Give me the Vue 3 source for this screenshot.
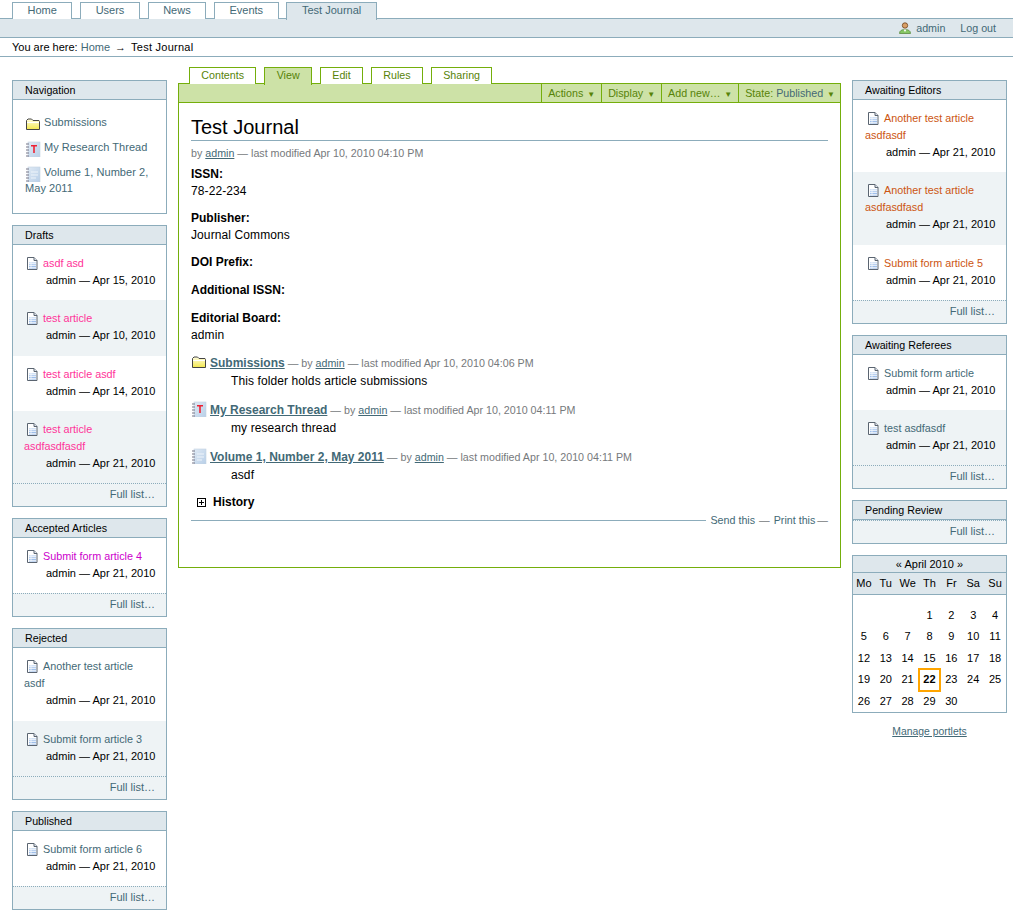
<script setup>
const topTabs = [
  { label: 'Home' },
  { label: 'Users' },
  { label: 'News' },
  { label: 'Events' },
  { label: 'Test Journal', active: true },
];

const viewTabs = [
  { label: 'Contents' },
  { label: 'View', active: true },
  { label: 'Edit' },
  { label: 'Rules' },
  { label: 'Sharing' },
];

const leftPortlets = [
  {
    title: 'Drafts',
    color: '#ff3399',
    items: [
      { title: 'asdf asd', date: 'Apr 15, 2010' },
      { title: 'test article', date: 'Apr 10, 2010' },
      { title: 'test article asdf', date: 'Apr 14, 2010' },
      { title: 'test article asdfasdfasdf', date: 'Apr 21, 2010' },
    ],
  },
  {
    title: 'Accepted Articles',
    color: '#cc00cc',
    items: [{ title: 'Submit form article 4', date: 'Apr 21, 2010' }],
  },
  {
    title: 'Rejected',
    color: '#436976',
    items: [
      { title: 'Another test article asdf', date: 'Apr 21, 2010' },
      { title: 'Submit form article 3', date: 'Apr 21, 2010' },
    ],
  },
  {
    title: 'Published',
    color: '#436976',
    items: [{ title: 'Submit form article 6', date: 'Apr 21, 2010' }],
  },
];

const rightPortlets = [
  {
    title: 'Awaiting Editors',
    color: '#cc5511',
    items: [
      { title: 'Another test article asdfasdf', date: 'Apr 21, 2010' },
      { title: 'Another test article asdfasdfasd', date: 'Apr 21, 2010' },
      { title: 'Submit form article 5', date: 'Apr 21, 2010' },
    ],
  },
  {
    title: 'Awaiting Referees',
    color: '#436976',
    items: [
      { title: 'Submit form article', date: 'Apr 21, 2010' },
      { title: 'test asdfasdf', date: 'Apr 21, 2010' },
    ],
  },
  { title: 'Pending Review', color: '#436976', items: [] },
];

const folderItems = [
  { icon: 'i-folder', title: 'Submissions', modified: 'Apr 10, 2010 04:06 PM', desc: 'This folder holds article submissions' },
  { icon: 'i-thread', title: 'My Research Thread', modified: 'Apr 10, 2010 04:11 PM', desc: 'my research thread' },
  { icon: 'i-book', title: 'Volume 1, Number 2, May 2011', modified: 'Apr 10, 2010 04:11 PM', desc: 'asdf' },
];

const weekdays = ['Mo', 'Tu', 'We', 'Th', 'Fr', 'Sa', 'Su'];
const weeks = [
  ['', '', '', 1, 2, 3, 4],
  [5, 6, 7, 8, 9, 10, 11],
  [12, 13, 14, 15, 16, 17, 18],
  [19, 20, 21, 22, 23, 24, 25],
  [26, 27, 28, 29, 30, '', ''],
];
</script>

<template>
  <div class="page">
    <svg class="defs" width="0" height="0">
      <defs>
        <linearGradient id="g-folder" x1="0" y1="0" x2="0" y2="1">
          <stop offset="0" stop-color="#fffde0" />
          <stop offset="1" stop-color="#f3e84e" />
        </linearGradient>
        <linearGradient id="g-note" x1="0" y1="0" x2="1" y2="1">
          <stop offset="0" stop-color="#dfe9f4" />
          <stop offset="1" stop-color="#b8cfe8" />
        </linearGradient>
        <linearGradient id="g-doc" x1="0" y1="0" x2="0" y2="1">
          <stop offset="0" stop-color="#d8e6f7" />
          <stop offset="1" stop-color="#86aee4" />
        </linearGradient>
      </defs>
      <symbol id="i-folder" viewBox="0 0 16 16">
        <path d="M1.5 13.500V4.500L3 3h3.500L8 4.500h6l.5 1v8z" fill="url(#g-folder)" stroke="#444" stroke-linejoin="round" />
        <path d="M2 6.500h12" stroke="#fff" />
      </symbol>
      <symbol id="i-thread" viewBox="0 0 16 16">
        <rect x="3" y="1" width="12" height="15" fill="url(#g-note)" stroke="#c4d2e0" stroke-width=".6" />
        <path d="M1 3h3M1 6h3M1 9h3M1 12h3M1 15h3" stroke="#778" />
        <path d="M6 4h6v1.500h-2.200V12H8.200V5.500H6z" fill="#ee2233" />
      </symbol>
      <symbol id="i-book" viewBox="0 0 16 16">
        <rect x="3" y="1" width="12" height="15" fill="url(#g-note)" stroke="#c4d2e0" stroke-width=".6" />
        <path d="M1 3h3M1 6h3M1 9h3M1 12h3M1 15h3" stroke="#778" />
        <path d="M6 6h7M6 9h7M6 12h5" stroke="#eef4fa" />
      </symbol>
      <symbol id="i-doc" viewBox="0 0 13 13">
        <path d="M1.500.500h6.500l3 3v9h-9.500z" fill="#fff" stroke="#5a6470" />
        <path d="M8 .500v3h3" fill="#dfe5ee" stroke="#5a6470" />
        <path d="M3 5h7v6.500H3z" fill="url(#g-doc)" />
        <path d="M5 5v6.500M3 6.500h7M3 8.500h7M3 10.500h7" stroke="#f2f6fb" stroke-width=".8" />
      </symbol>
      <symbol id="i-user" viewBox="0 0 12 12">
        <circle cx="6" cy="3.500" r="2.700" fill="#d99f66" stroke="#70431c" stroke-width=".8" />
        <path d="M.500 11.500c0-3 2.500-4 5.500-4s5.500 1 5.500 4z" fill="#86c765" stroke="#5c8a40" stroke-width=".8" />
        <path d="M4.500 7.500h3L6 10z" fill="#fff" />
      </symbol>
    </svg>

    <nav class="top-tabs">
      <a v-for="t in topTabs" :key="t.label" class="top-tab" :class="{ active: t.active }">{{ t.label }}</a>
    </nav>
    <div class="personal-bar">
      <svg class="icon user-icon"><use href="#i-user" /></svg>
      <a class="personal-link">admin</a>
      <a class="personal-link logout">Log out</a>
    </div>
    <div class="breadcrumbs">
      You are here:&nbsp;<a class="link">Home</a><span class="arrow">→</span><span class="crumb">Test Journal</span>
    </div>

    <div class="columns">
      <aside class="side">
        <section class="portlet nav-portlet">
          <h3 class="portlet-head">Navigation</h3>
          <div class="nav-body">
            <div class="nav-item"><svg class="icon"><use href="#i-folder" /></svg><a class="link">Submissions</a></div>
            <div class="nav-item"><svg class="icon"><use href="#i-thread" /></svg><a class="link">My Research Thread</a></div>
            <div class="nav-item"><svg class="icon"><use href="#i-book" /></svg><a class="link">Volume 1, Number 2, May 2011</a></div>
          </div>
        </section>

        <section v-for="p in leftPortlets" :key="p.title" class="portlet">
          <h3 class="portlet-head">{{ p.title }}</h3>
          <div v-for="item in p.items" :key="item.title" class="entry">
            <div class="entry-title" :style="{ color: p.color }">
              <svg class="icon doc-icon"><use href="#i-doc" /></svg>{{ item.title }}
            </div>
            <div class="entry-meta">admin — {{ item.date }}</div>
          </div>
          <div class="portlet-foot"><a class="link">Full list…</a></div>
        </section>
      </aside>

      <main class="center">
        <div class="view-tabs">
          <a v-for="t in viewTabs" :key="t.label" class="view-tab" :class="{ active: t.active }">{{ t.label }}</a>
        </div>
        <div class="action-bar">
          <span class="action">Actions <i class="caret">▼</i></span>
          <span class="action">Display <i class="caret">▼</i></span>
          <span class="action">Add new… <i class="caret">▼</i></span>
          <span class="action">State: <span class="state">Published</span> <i class="caret">▼</i></span>
        </div>
        <article class="content">
          <h1 class="title">Test Journal</h1>
          <div class="byline">by <a class="link under">admin</a> — last modified Apr 10, 2010 04:10 PM</div>

          <dl class="fields">
            <dt>ISSN:</dt>
            <dd>78-22-234</dd>
            <dt>Publisher:</dt>
            <dd>Journal Commons</dd>
            <dt>DOI Prefix:</dt>
            <dd class="empty"></dd>
            <dt>Additional ISSN:</dt>
            <dd class="empty"></dd>
            <dt>Editorial Board:</dt>
            <dd>admin</dd>
          </dl>

          <div v-for="f in folderItems" :key="f.title" class="folder-item">
            <div class="folder-line">
              <svg class="icon"><use :href="'#' + f.icon" /></svg>
              <a class="link under folder-title">{{ f.title }}</a>
              <span class="byline-inline"> — by <a class="link under">admin</a> — last modified {{ f.modified }}</span>
            </div>
            <div class="folder-desc">{{ f.desc }}</div>
          </div>

          <div class="history">
            <span class="plus-box"></span>
            <b>History</b>
          </div>

          <div class="doc-actions">
            <span class="rule"></span>
            <a class="link">Send this</a><span class="sep">—</span><a class="link">Print this</a><span class="sep">—</span>
          </div>
        </article>
      </main>

      <aside class="side right">
        <section v-for="p in rightPortlets" :key="p.title" class="portlet">
          <h3 class="portlet-head">{{ p.title }}</h3>
          <div v-for="item in p.items" :key="item.title" class="entry">
            <div class="entry-title" :style="{ color: p.color }">
              <svg class="icon doc-icon"><use href="#i-doc" /></svg>{{ item.title }}
            </div>
            <div class="entry-meta">admin — {{ item.date }}</div>
          </div>
          <div class="portlet-foot"><a class="link">Full list…</a></div>
        </section>

        <section class="portlet calendar">
          <div class="cal-head">« April 2010 »</div>
          <div class="cal-grid cal-weekdays">
            <span v-for="d in weekdays" :key="d">{{ d }}</span>
          </div>
          <div class="cal-body">
            <div v-for="(w, i) in weeks" :key="i" class="cal-grid cal-row">
              <span v-for="(d, j) in w" :key="j" :class="{ today: d === 22 }">{{ d }}</span>
            </div>
          </div>
        </section>
        <a class="manage">Manage portlets</a>
      </aside>
    </div>
  </div>
</template>

<style>
html, body {
  background: #fff;
}
</style>

<style scoped>
.page {
  font-family: "Liberation Sans", Arial, sans-serif;
  font-size: 11px;
  color: #000;
  line-height: 17px;
  height: 915px;
  overflow: hidden;
}

.defs {
  position: absolute;
}

.icon {
  width: 16px;
  height: 16px;
  vertical-align: -3px;
}

.link {
  color: #436976;
}

.under {
  text-decoration: underline;
}

.top-tabs {
  display: flex;
  gap: 7.8px;
  padding: 2px 0 0 12px;
  height: 16px;
}

.top-tab {
  height: 16px;
  line-height: 15px;
  padding: 0 14.5px;
  border: 1px solid #8cacbb;
  border-bottom: none;
  color: #436976;
  background: #fff;
}

.top-tab.active {
  height: 17px;
  background: #dee7ec;
  position: relative;
  z-index: 1;
}

.personal-bar {
  display: flex;
  align-items: center;
  justify-content: flex-end;
  height: 18px;
  padding-right: 17px;
  font-size: 10.7px;
  background: #dee7ec;
  border-top: 1px solid #8cacbb;
  border-bottom: 1px solid #8cacbb;
}

.user-icon {
  width: 12px;
  height: 12px;
  margin-right: 5px;
}

.personal-link {
  color: #436976;
}

.logout {
  margin-left: 15px;
}

.breadcrumbs {
  height: 18px;
  line-height: 18px;
  padding-left: 12px;
  border-bottom: 1px solid #8cacbb;
}

.arrow {
  margin: 0 5px;
  font-weight: bold;
}

.crumb {
  letter-spacing: .25px;
}

.columns {
  display: flex;
  align-items: flex-start;
  gap: 11px;
  padding: 10px 6px 0 12px;
}

.side {
  width: 155px;
  flex: none;
  padding-top: 13px;
  display: flex;
  flex-direction: column;
  gap: 11px;
}

.portlet {
  border: 1px solid #8cacbb;
  background: #fff;
}

.portlet-head {
  margin: 0;
  height: 18px;
  line-height: 18px;
  padding-left: 12px;
  font-size: 10.7px;
  font-weight: normal;
  background: #dee7ec;
  border-bottom: 1px solid #8cacbb;
}

.nav-body {
  padding: 14px 12px 8px;
}

.nav-item {
  margin-bottom: 9px;
  line-height: 16px;
  letter-spacing: .05px;
}

.nav-item .icon {
  margin: -3px 3px -3px 0;
}

.entry {
  padding: 10px 12px 11.25px 11px;
}

.right .entry {
  padding-left: 12px;
}

.entry:nth-of-type(even) {
  background: #eef3f5;
}

.entry-title {
  font-size: 10.8px;
}

.doc-icon {
  width: 13px;
  height: 13px;
  margin: 0 4px 0 2px;
}

.entry-meta {
  padding-left: 22px;
  white-space: nowrap;
}

.right .entry-meta {
  padding-left: 21px;
}

.portlet-foot {
  height: 22px;
  line-height: 21px;
  text-align: right;
  padding-right: 11px;
  border-top: 1px dotted #8cacbb;
  background: #eef3f5;
}

.center {
  flex: 1;
  min-width: 0;
}

.view-tabs {
  display: flex;
  gap: 8px;
  height: 16px;
  padding-left: 11px;
  font-size: 10.7px;
}

.view-tab {
  height: 16px;
  line-height: 15px;
  padding: 0 11.3px;
  border: 1px solid #74ae0b;
  border-bottom: none;
  color: #578308;
  background: #fff;
}

.view-tab.active {
  height: 17px;
  background: #cde2a7;
  position: relative;
  z-index: 1;
}

.action-bar {
  display: flex;
  justify-content: flex-end;
  height: 18px;
  font-size: 10.7px;
  background: #cde2a7;
  border: 1px solid #74ae0b;
  color: #578308;
}

.action {
  padding: 0 6px;
  line-height: 18px;
  border-left: 1px solid #74ae0b;
  white-space: nowrap;
}

.action:last-child {
  padding-right: 5px;
}

.caret {
  font-style: normal;
  font-size: 8px;
  margin-left: 1px;
}

.state {
  color: #436976;
}

.content {
  height: 465px;
  box-sizing: border-box;
  padding: 12px 12px 0;
  border: 1px solid #74ae0b;
  border-top: none;
}

.title {
  margin: 0;
  font-size: 20px;
  font-weight: normal;
  line-height: 25px;
  border-bottom: 1px solid #8cacbb;
}

.byline {
  color: #76797c;
  font-size: 10.7px;
  margin-top: 4px;
}

.fields {
  margin: 4px 0 0;
}

.fields dt {
  font-weight: bold;
  font-size: 12px;
}

.fields dd {
  margin: 0 0 10px;
  font-size: 12px;
  letter-spacing: .1px;
}

.fields dd.empty {
  display: none;
}

.fields dt:has(+ .empty) {
  margin-bottom: 11px;
}

.folder-item {
  margin-bottom: 10.8px;
}

.folder-line {
  height: 18px;
  line-height: 18px;
  white-space: nowrap;
}

.folder-title {
  font-weight: bold;
  font-size: 12px;
  margin-left: 3px;
}

.byline-inline {
  color: #76797c;
  font-size: 10.7px;
}

.folder-desc {
  padding-left: 40px;
  line-height: 18px;
  font-size: 12px;
  letter-spacing: .1px;
}

.history {
  display: flex;
  align-items: center;
  gap: 7px;
  padding-left: 6px;
  font-size: 12px;
  margin-top: 3px;
}

.plus-box {
  width: 7px;
  height: 7px;
  border: 1px solid #000;
  background:
    linear-gradient(#000, #000) center / 5px 1px no-repeat,
    linear-gradient(#000, #000) center / 1px 5px no-repeat;
}

.doc-actions {
  display: flex;
  align-items: center;
  margin-top: 1px;
  font-size: 10.7px;
}

.rule {
  flex: 1;
  height: 1px;
  margin-right: 4px;
  background: #8cacbb;
}

.sep {
  color: #76797c;
  padding: 0 4px;
}

.doc-actions .sep:last-child {
  padding-right: 0;
  padding-left: 2px;
}

.cal-head {
  height: 16px;
  line-height: 16px;
  text-align: center;
  background: #dee7ec;
  border-bottom: 1px solid #8cacbb;
}

.cal-grid {
  display: grid;
  grid-template-columns: repeat(7, 1fr);
  text-align: center;
}

.cal-weekdays {
  height: 21px;
  line-height: 20px;
  background: #dee7ec;
  border-bottom: 1px solid #8cacbb;
}

.cal-body {
  padding: 9.5px 0 0;
}

.cal-row {
  height: 21.5px;
  line-height: 21.5px;
}

.today {
  font-weight: bold;
  outline: 2px solid #ffa500;
  outline-offset: -1px;
}

.manage {
  text-align: center;
  color: #436976;
  font-size: 10.4px;
  line-height: 15px;
  text-decoration: underline;
}
</style>
